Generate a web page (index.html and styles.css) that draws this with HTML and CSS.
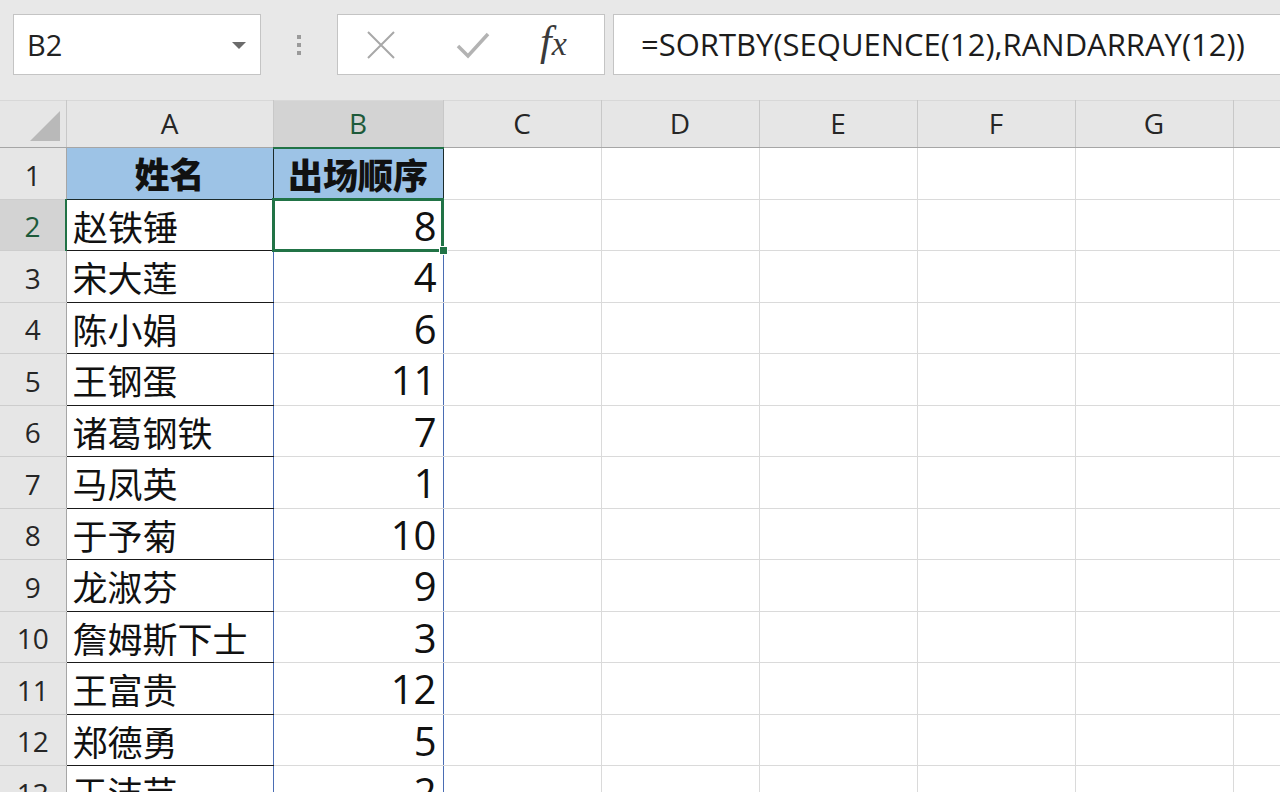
FILE: index.html
```html
<!DOCTYPE html>
<html lang="zh-CN">
<head>
<meta charset="utf-8">
<title>Excel SORTBY</title>
<link rel="stylesheet" href="styles.css">
</head>
<body>
<div class="toolbar">
  <div class="namebox">
    <span class="nb-text">B2</span>
    <svg class="dd" width="14" height="8" viewBox="0 0 14 8"><path d="M0 0H14L7 7Z" fill="#6b6b6b"/></svg>
  </div>
  <div class="dots"><i></i><i></i><i></i></div>
  <div class="btns">
    <svg class="ico" width="30" height="30" viewBox="0 0 30 30"><path d="M2 2L28 28M28 2L2 28" stroke="#a8a8a8" stroke-width="2" fill="none"/></svg>
    <svg class="ico" width="34" height="30" viewBox="0 0 34 30"><path d="M2 16L12 26L32 4" stroke="#b3b3b3" stroke-width="3.5" fill="none"/></svg>
    <span class="fx"><i>f</i><i class="x">x</i></span>
  </div>
  <div class="formula">=SORTBY(SEQUENCE(12),RANDARRAY(12))</div>
</div>
<table class="sheet">
  <colgroup>
    <col class="c-rh"><col class="c-a"><col class="c-b"><col class="c-n"><col class="c-n"><col class="c-n"><col class="c-n"><col class="c-n"><col class="c-h">
  </colgroup>
  <tr class="hdr">
    <th class="corner"><svg width="66" height="46" viewBox="0 0 66 46"><path d="M60 10V40H30Z" fill="#b9b9b9"/></svg></th>
    <th>A</th><th class="selcol">B</th><th>C</th><th>D</th><th>E</th><th>F</th><th>G</th><th></th>
  </tr>
  <tr>
    <th class="rh">1</th><td class="a t">姓名</td><td class="b t">出场顺序</td><td></td><td></td><td></td><td></td><td></td><td></td>
  </tr>
  <tr>
    <th class="rh selrow">2</th><td class="a">赵铁锤</td><td class="b n sel">8</td><td></td><td></td><td></td><td></td><td></td><td></td>
  </tr>
  <tr>
    <th class="rh">3</th><td class="a">宋大莲</td><td class="b n">4</td><td></td><td></td><td></td><td></td><td></td><td></td>
  </tr>
  <tr>
    <th class="rh">4</th><td class="a">陈小娟</td><td class="b n">6</td><td></td><td></td><td></td><td></td><td></td><td></td>
  </tr>
  <tr>
    <th class="rh">5</th><td class="a">王钢蛋</td><td class="b n">11</td><td></td><td></td><td></td><td></td><td></td><td></td>
  </tr>
  <tr>
    <th class="rh">6</th><td class="a">诸葛钢铁</td><td class="b n">7</td><td></td><td></td><td></td><td></td><td></td><td></td>
  </tr>
  <tr>
    <th class="rh">7</th><td class="a">马凤英</td><td class="b n">1</td><td></td><td></td><td></td><td></td><td></td><td></td>
  </tr>
  <tr>
    <th class="rh">8</th><td class="a">于予菊</td><td class="b n">10</td><td></td><td></td><td></td><td></td><td></td><td></td>
  </tr>
  <tr>
    <th class="rh">9</th><td class="a">龙淑芬</td><td class="b n">9</td><td></td><td></td><td></td><td></td><td></td><td></td>
  </tr>
  <tr>
    <th class="rh">10</th><td class="a">詹姆斯下士</td><td class="b n">3</td><td></td><td></td><td></td><td></td><td></td><td></td>
  </tr>
  <tr>
    <th class="rh">11</th><td class="a">王富贵</td><td class="b n">12</td><td></td><td></td><td></td><td></td><td></td><td></td>
  </tr>
  <tr>
    <th class="rh">12</th><td class="a">郑德勇</td><td class="b n">5</td><td></td><td></td><td></td><td></td><td></td><td></td>
  </tr>
  <tr>
    <th class="rh">13</th><td class="a">王洁芸</td><td class="b n">2</td><td></td><td></td><td></td><td></td><td></td><td></td>
  </tr>
</table>
</body>
</html>
```

FILE: styles.css
```css
html, body {
  margin: 0;
  padding: 0;
  width: 1280px;
  height: 792px;
  overflow: hidden;
  background: #ffffff;
  font-family: "Open Sans", "Noto Sans CJK SC", sans-serif;
}

.toolbar {
  height: 100px;
  box-sizing: border-box;
  background: #e8e8e8;
  display: flex;
  align-items: flex-start;
  padding: 14px 0 0 13px;
}

.namebox {
  width: 248px;
  height: 61px;
  box-sizing: border-box;
  background: #fff;
  border: 1px solid #c4c4c4;
  display: flex;
  align-items: center;
  justify-content: space-between;
  padding: 0 14px 0 13px;
}

.nb-text {
  font-size: 29px;
  color: #222;
}

.dd { margin-top: 2px; }

.dots {
  width: 76px;
  height: 61px;
  display: flex;
  flex-direction: column;
  align-items: center;
  justify-content: center;
  gap: 4px;
}

.dots i {
  display: block;
  width: 4px;
  height: 4px;
  background: #9a9a9a;
}

.btns {
  width: 268px;
  height: 61px;
  box-sizing: border-box;
  background: #fff;
  border: 1px solid #c4c4c4;
  display: flex;
  align-items: center;
  padding: 0 0 0 28px;
}

.btns .ico:first-child { margin-right: 60px; }
.btns .ico:nth-child(2) { margin-right: 50px; }

.fx {
  font-family: "Liberation Serif", serif;
  font-size: 42px;
  color: #3a3a3a;
  line-height: 1.1;
  margin-top: -6px;
}

.fx .x {
  font-size: 34px;
}

.formula {
  margin-left: 8px;
  flex: 1;
  height: 61px;
  box-sizing: border-box;
  background: #fff;
  border: 1px solid #c4c4c4;
  border-right: none;
  padding-left: 27px;
  font-size: 31px;
  line-height: 59px;
  color: #1c1c1c;
  white-space: nowrap;
}

.sheet {
  border-collapse: collapse;
  table-layout: fixed;
  width: 1280px;
}

.c-rh { width: 66px; }
.c-a { width: 207px; }
.c-b { width: 170px; }
.c-n { width: 158px; }
.c-h { width: 47px; }

.sheet th, .sheet td {
  padding: 0;
  white-space: nowrap;
  line-height: 1.2;
}

.sheet tr { height: 51.5px; }
.sheet tr.hdr { height: 47px; }

.hdr th {
  background: #e6e6e6;
  border-top: 1px solid #d8d8d8;
  border-bottom: 1px solid #a6a6a6;
  border-right: 1px solid #c8c8c8;
  font-weight: 400;
  font-size: 28px;
  color: #262626;
  text-align: center;
  vertical-align: middle;
}

.hdr th.corner svg { display: block; }

.hdr th.selcol {
  background: #d3d3d3;
  color: #1d5a3a;
  border-bottom: 2px solid #217346;
}

.rh {
  background: #e6e6e6;
  font-weight: 400;
  font-size: 28px;
  color: #262626;
  text-align: center;
  vertical-align: middle;
  border-bottom: 1px solid #cdcdcd;
  border-right: 1px solid #a6a6a6;
  padding-top: 5px !important;
}

.rh.selrow {
  background: #d3d3d3;
  color: #1d5a3a;
  border-right: 2px solid #217346;
}

.sheet td {
  border: 1px solid #dadada;
  background: #fff;
  font-family: "Noto Sans CJK SC", "Open Sans", sans-serif;
  font-size: 35px;
  color: #111;
  vertical-align: middle;
}

.sheet td.a {
  border: 1px solid #1a1a1a;
  border-right-color: #4a6db3;
  padding-left: 6px;
  padding-top: 2px;
}

.sheet td.b {
  border-left: 1px solid #4a6db3;
  border-right: 1px solid #4a6db3;
}

.sheet td.t {
  background: #9dc3e6;
  border: 1px solid #1c2b2b;
  font-weight: 900;
  font-size: 35px;
  text-align: center;
  padding: 0;
}

.sheet td.n {
  font-family: "Open Sans", sans-serif;
  font-size: 40px;
  line-height: 1.15;
  text-align: right;
  padding-right: 6px;
  padding-top: 2px;
}

.sheet td.sel {
  position: relative;
  outline: 3px solid #217346;
  outline-offset: -2px;
}

.sheet td.sel::after {
  content: "";
  position: absolute;
  right: -5px;
  bottom: -5px;
  width: 7px;
  height: 7px;
  background: #217346;
  border: 1px solid #fff;
}
```
